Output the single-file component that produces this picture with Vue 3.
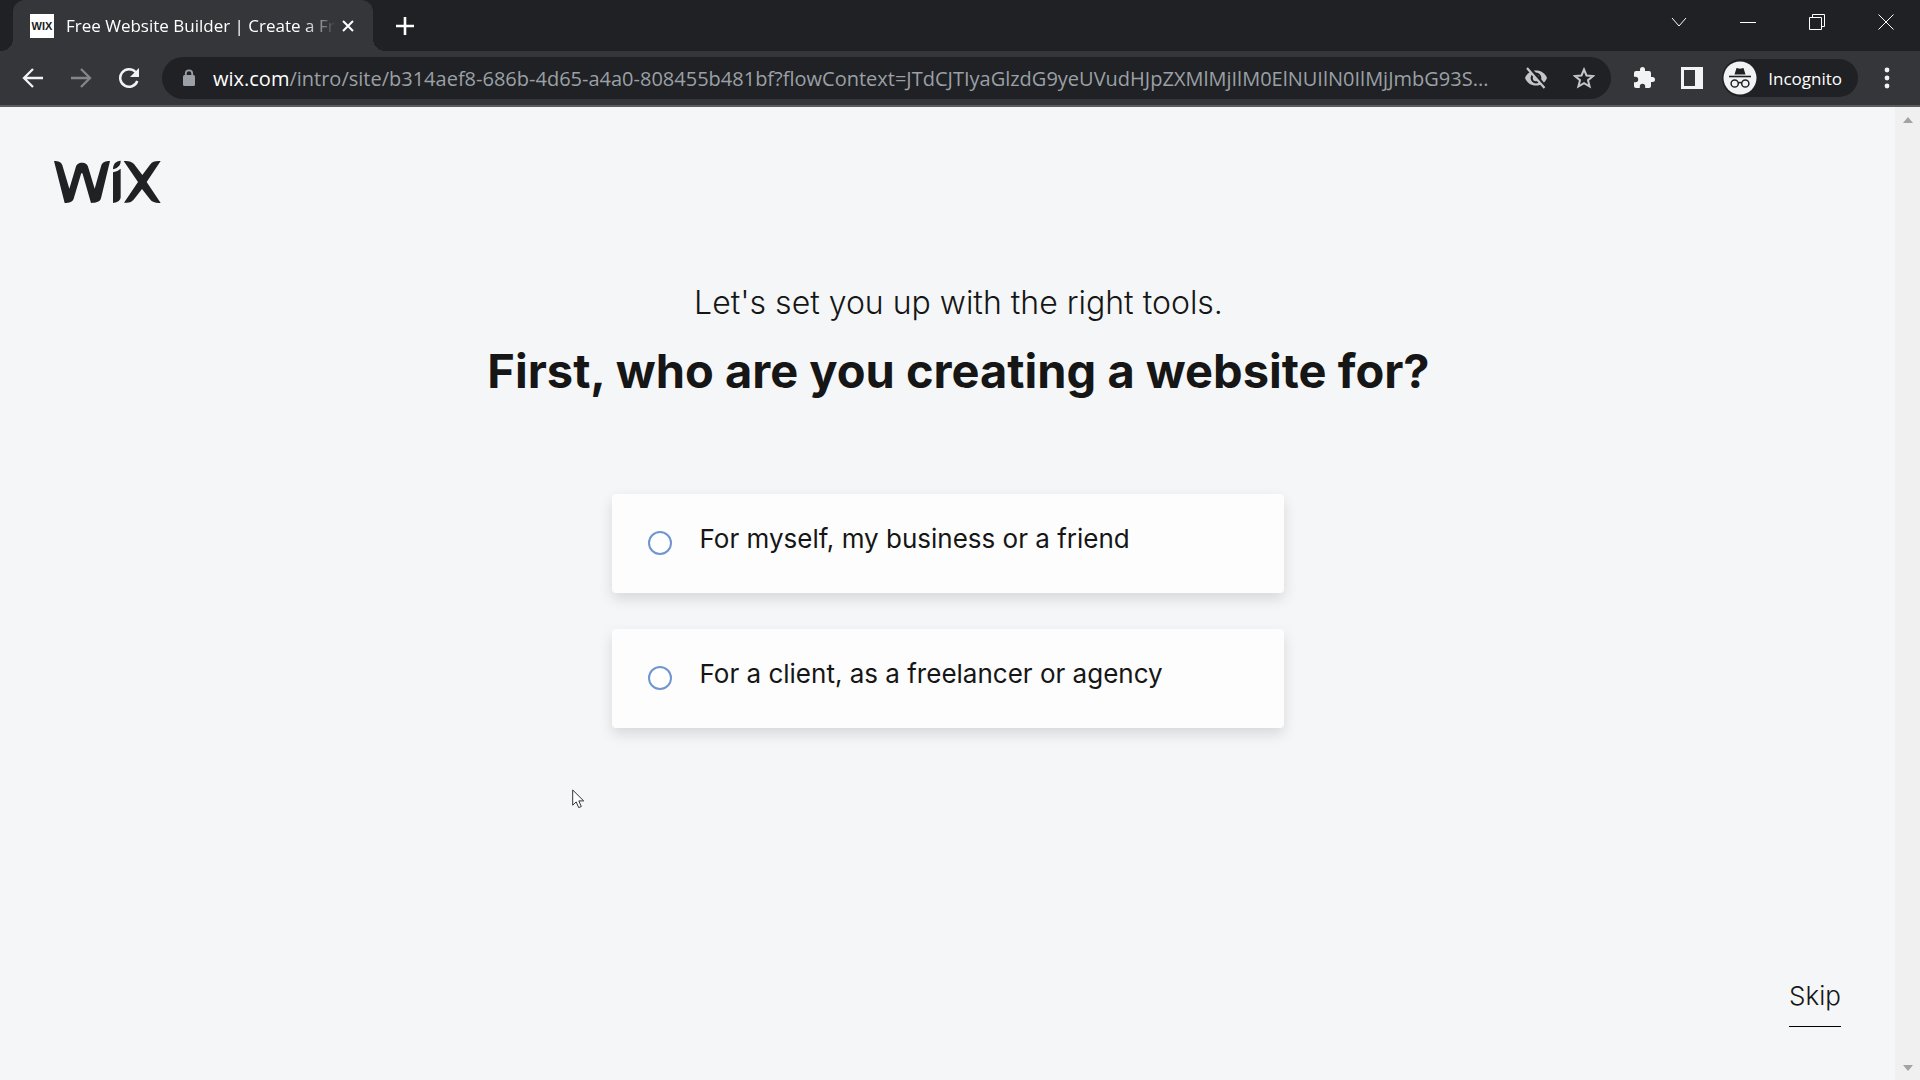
<script setup>
import { ref } from 'vue'

const tabTitle = 'Free Website Builder | Create a Fr'
const host = 'wix.com'
const path = ref('/intro/site/b314aef8-686b-4d65-a4a0-808455b481bf?flowContext=JTdCJTIyaGlzdG9yeUVudHJpZXMlMjIlM0ElNUIlN0IlMjJmbG93S...')

const options = [
  { value: 'myself', label: 'For myself, my business or a friend' },
  { value: 'client', label: 'For a client, as a freelancer or agency' },
]
const audience = ref('')
</script>

<template>
  <div class="browser">
    <!-- tab strip -->
    <header class="tab-strip">
      <div class="tab">
        <span class="favicon" aria-hidden="true">WIX</span>
        <span class="tab-title">{{ tabTitle }}</span>
        <button class="tab-close" type="button" aria-label="Close tab">
          <svg width="14" height="14" viewBox="0 0 14 14"><path d="M2 2l10 10M12 2L2 12" fill="none" stroke="#fff" stroke-width="2" /></svg>
        </button>
      </div>
      <button class="new-tab" type="button" aria-label="New tab">
        <svg width="18" height="18" viewBox="0 0 18 18"><path d="M9 0v18M0 9h18" fill="none" stroke="#fff" stroke-width="2.6" /></svg>
      </button>
      <div class="window-controls">
        <button type="button" aria-label="Search tabs">
          <svg width="16" height="16" viewBox="0 0 16 16"><path d="M1 4l7 8 7-8" /></svg>
        </button>
        <button type="button" aria-label="Minimize">
          <svg width="16" height="16" viewBox="0 0 16 16"><path d="M0 8.5h16" /></svg>
        </button>
        <button type="button" aria-label="Restore">
          <svg width="16" height="16" viewBox="0 0 16 16"><path d="M.5 3.5h12v12h-12zM3.5 3.5v-3h12v12h-3" /></svg>
        </button>
        <button type="button" aria-label="Close">
          <svg width="16" height="16" viewBox="0 0 16 16"><path d="M.5.5l15 15M15.5.5l-15 15" /></svg>
        </button>
      </div>
    </header>

    <!-- toolbar -->
    <nav class="toolbar">
      <button class="tool" type="button" aria-label="Back">
        <svg width="22" height="22" viewBox="0 0 22 22"><path d="M21 11H2.500M11 2l-9 9 9 9" fill="none" stroke="#f1f3f4" stroke-width="2.3" /></svg>
      </button>
      <button class="tool" type="button" aria-label="Forward">
        <svg width="22" height="22" viewBox="0 0 22 22"><path d="M1 11h18.500M11 2l9 9-9 9" fill="none" stroke="#85868a" stroke-width="2.3" /></svg>
      </button>
      <button class="tool" type="button" aria-label="Reload">
        <svg width="22" height="22" viewBox="0 0 22 22">
          <path d="M19.300 14A8.800 8.800 0 1 1 17.500 5" fill="none" stroke="#f1f3f4" stroke-width="2.5" />
          <path d="M21 1v9h-9z" fill="#f1f3f4" />
        </svg>
      </button>

      <div class="omnibox">
        <svg class="lock" width="14" height="18" viewBox="0 0 14 18">
          <path d="M3.800 8V4.500a3.200 3.200 0 0 1 6.400 0V8" fill="none" stroke="#9aa0a6" stroke-width="1.800" />
          <rect x="1" y="6" width="12" height="11" rx="1.500" fill="#9aa0a6" />
        </svg>
        <label class="host" for="address">{{ host }}</label>
        <input id="address" v-model="path" class="address" type="text" spellcheck="false" />
        <button class="tool" type="button" aria-label="Third-party cookies blocked">
          <svg width="24" height="22" viewBox="0 0 24 22">
            <path d="M1 11C3 6 7 3.500 12 3.500S21 6 23 11c-2 5-6 7.500-11 7.500S3 16 1 11z" fill="#c4c7ca" />
            <circle cx="12" cy="11" r="4.300" fill="none" stroke="#202124" stroke-width="2.2" />
            <path d="M5.500.5l16.500 20" stroke="#202124" stroke-width="3" />
            <path d="M3 1l17.500 20" stroke="#c4c7ca" stroke-width="2.2" />
          </svg>
        </button>
        <button class="tool" type="button" aria-label="Bookmark this tab">
          <svg width="22" height="22" viewBox="0 0 22 22"><path d="M11 2.500l2.500 6 6.500.5-5 4.200 1.600 6.300L11 16.100l-5.600 3.400L7 13.200 2 9l6.500-.5z" fill="none" stroke="#c4c7ca" stroke-width="2" /></svg>
        </button>
      </div>

      <button class="tool" type="button" aria-label="Extensions">
        <svg width="24" height="24" viewBox="0 0 24 24"><path d="M20.500 11H19V7a2 2 0 0 0-2-2h-4V3.500a2.500 2.500 0 0 0-5 0V5H4a2 2 0 0 0-2 2v3.800h1.500a2.700 2.700 0 0 1 0 5.400H2V20a2 2 0 0 0 2 2h3.800v-1.500a2.700 2.700 0 0 1 5.400 0V22H17a2 2 0 0 0 2-2v-4h1.500a2.500 2.500 0 0 0 0-5z" fill="#f1f3f4" /></svg>
      </button>
      <button class="tool" type="button" aria-label="Side panel">
        <svg width="22" height="22" viewBox="0 0 22 22"><path d="M0 0h22v22H0zM3 3v16h11V3z" fill="#f1f3f4" fill-rule="evenodd" /></svg>
      </button>
      <button class="incognito" type="button">
        <svg width="34" height="34" viewBox="0 0 34 34">
          <circle cx="17" cy="17" r="16.500" fill="#f1f3f4" />
          <path d="M11.500 13.500l2-6.500 3.500.8 3.500-.8 2 6.500z" fill="#202124" />
          <path d="M6 15.500h22" stroke="#202124" stroke-width="1.600" />
          <g fill="none" stroke="#202124" stroke-width="1.500">
            <circle cx="11.700" cy="22.500" r="3.600" />
            <circle cx="22.300" cy="22.500" r="3.600" />
            <path d="M15.300 22q1.700-1.200 3.400 0" />
          </g>
        </svg>
        <span>Incognito</span>
      </button>
      <button class="tool" type="button" aria-label="Menu">
        <svg width="6" height="22" viewBox="0 0 6 22" fill="#f1f3f4"><circle cx="3" cy="3" r="2.400" /><circle cx="3" cy="11" r="2.400" /><circle cx="3" cy="19" r="2.400" /></svg>
      </button>
    </nav>

    <div class="viewport">
      <main class="page">
        <a class="logo" href="#" aria-label="Wix">
          <svg width="107" height="44" viewBox="72 60 321 132" fill="#202124">
            <path d="M72 63C86 63 94 66 97 76L118 146 136 86C139 72 146 68 156 68S173 72 176 86L194 146 214 76C218 66 226 63 240 63L213 175C210 185 200 189 183 189L158 102Q156 96 153 102L131 176C128 185 118 189 104 189z" />
            <path d="M249 88C249 70 258 64 272 62 272 76 266 82 249 88zM249 97Q264 94 272 86V172Q272 186 249 189z" />
            <path d="M281 63C295 62 305 64 312 72L337 105 360 74C366 65 376 62 392 63L350 126 392 189C378 190 366 187 360 178L336 147 312 178C305 187 296 190 282 188L324 126z" />
          </svg>
        </a>

        <div class="headings">
          <p class="lead">Let's set you up with the right tools.</p>
          <h1 class="question">First, who are you creating a website for?</h1>
        </div>

        <div class="options" role="radiogroup" aria-label="First, who are you creating a website for?">
          <label v-for="o in options" :key="o.value" class="option">
            <input v-model="audience" type="radio" name="audience" :value="o.value" />
            <span>{{ o.label }}</span>
          </label>
        </div>

        <a class="skip" href="#">Skip</a>
      </main>

      <div class="scrollbar" aria-hidden="true">
        <svg width="10" height="6" viewBox="0 0 10 6"><path d="M0 6l5-6 5 6z" fill="#a3a3a3" /></svg>
        <svg width="10" height="6" viewBox="0 0 10 6"><path d="M0 0l5 6 5-6z" fill="#a3a3a3" /></svg>
      </div>

      <svg class="pointer" width="13" height="20" viewBox="0 0 13 20"><path d="M.7 1v15.200l3.500-3.300 2.500 5.700 2.600-1.100-2.500-5.600h4.900z" fill="#fff" stroke="#333" stroke-width="1" /></svg>
    </div>
  </div>
</template>

<style>
body {
  margin: 0;
}
</style>

<style scoped>
.browser {
  display: flex;
  flex-direction: column;
  min-height: 100vh;
  font-family: 'Open Sans', 'Noto Sans', sans-serif;
  color: #fff;
}
button {
  display: flex;
  align-items: center;
  justify-content: center;
  padding: 0;
  border: 0;
  background: transparent;
  color: inherit;
  font: inherit;
}

/* tab strip */
.tab-strip {
  display: flex;
  height: 51px;
  padding-left: 13px;
  background: #202124;
}
.tab {
  position: relative;
  display: flex;
  align-items: center;
  box-sizing: border-box;
  width: 360px;
  padding: 0 13px 0 17px;
  border-radius: 12px 12px 0 0;
  background: #35363a;
}
.tab::before,
.tab::after {
  content: '';
  position: absolute;
  bottom: 0;
  width: 12px;
  height: 12px;
}
.tab::before {
  right: 100%;
  background: radial-gradient(circle at 0 0, #202124 12px, #35363a 12px);
}
.tab::after {
  left: 100%;
  background: radial-gradient(circle at 100% 0, #202124 12px, #35363a 12px);
}
.favicon {
  flex: none;
  width: 24px;
  font: bold 11px/24px 'Liberation Sans', Arial, sans-serif;
  text-align: center;
  color: #202124;
  background: #fff;
}
.tab-title {
  flex: 1;
  margin-left: 12px;
  font-size: 17px;
  line-height: 24px;
  white-space: nowrap;
  mask-image: linear-gradient(90deg, #000 88%, transparent);
}
.tab-close {
  flex: none;
  width: 24px;
  height: 24px;
}
.new-tab {
  width: 40px;
  margin: 0 0 0 12px;
}
.window-controls {
  display: flex;
  height: 43px;
  margin-left: auto;
}
.window-controls button {
  width: 69px;
}
.window-controls svg {
  fill: none;
  stroke: #fff;
  stroke-width: 1;
}

/* toolbar */
.toolbar {
  display: flex;
  align-items: center;
  height: 54px;
  padding: 0 9px;
  border-bottom: 2px solid #5b5c60;
  background: #35363a;
}
.tool {
  flex: none;
  width: 48px;
  height: 40px;
}
.omnibox {
  display: flex;
  align-items: center;
  flex: 1;
  min-width: 0;
  height: 42px;
  margin: 0 9px;
  padding: 0 3px 0 20px;
  box-sizing: border-box;
  border-radius: 21px;
  background: #202124;
  font-size: 20px;
}
.lock {
  flex: none;
  margin-right: 17px;
}
.address {
  flex: 1;
  min-width: 0;
  padding: 0;
  border: 0;
  outline: 0;
  background: transparent;
  color: #9aa0a6;
  font: inherit;
}
.incognito {
  gap: 11px;
  height: 38px;
  margin: 0 5px 0 6px;
  padding: 0 16px 0 1px;
  border-radius: 19px;
  background: #202124;
  font-size: 17px;
}

/* page */
.viewport {
  position: relative;
  display: flex;
  flex: 1;
  font-family: Inter, 'Open Sans', sans-serif;
  color: #161616;
  background: #f5f6f8;
}
.page {
  display: flex;
  flex: 1;
  flex-direction: column;
  padding: 53px 54px;
}
.logo {
  align-self: flex-start;
}
.logo svg {
  display: block;
}
.headings {
  padding-left: 22px;
  text-align: center;
}
.lead {
  margin: 75px 0 0;
  font-size: 32px;
  font-weight: 300;
  line-height: 48px;
}
.question {
  margin: 12px 0 0;
  font-size: 47px;
  font-weight: 700;
  line-height: 64px;
}
.options {
  display: flex;
  flex-direction: column;
  gap: 36px;
  width: 672px;
  max-width: 100%;
  margin: 91px auto 48px;
}
.option {
  display: flex;
  align-items: flex-start;
  gap: 28px;
  padding: 27px 36px 36px;
  border-radius: 4px;
  background: #fdfdfd;
  box-shadow: 0 6px 14px rgba(0, 0, 0, 0.12);
  font-size: 26px;
  line-height: 36px;
}
.option input {
  appearance: none;
  flex: none;
  width: 24px;
  height: 24px;
  margin: 10px 0 0;
  border: 2px solid #6f96d1;
  border-radius: 50%;
  background: #fff;
}
.option input:checked {
  background: radial-gradient(circle, #6f96d1 5px, #fff 6px);
}
.skip {
  align-self: flex-end;
  margin: auto 0 0;
  padding-bottom: 12px;
  border-bottom: 1px solid #000;
  color: inherit;
  font-size: 26px;
  font-weight: 300;
  line-height: 36px;
  text-decoration: none;
}
.scrollbar {
  display: flex;
  flex-direction: column;
  align-items: center;
  justify-content: space-between;
  width: 25px;
  padding: 10px 0 9px;
  box-sizing: border-box;
  background: #f0f0f0;
}
.pointer {
  position: absolute;
  left: 572px;
  top: 682px;
}
</style>
